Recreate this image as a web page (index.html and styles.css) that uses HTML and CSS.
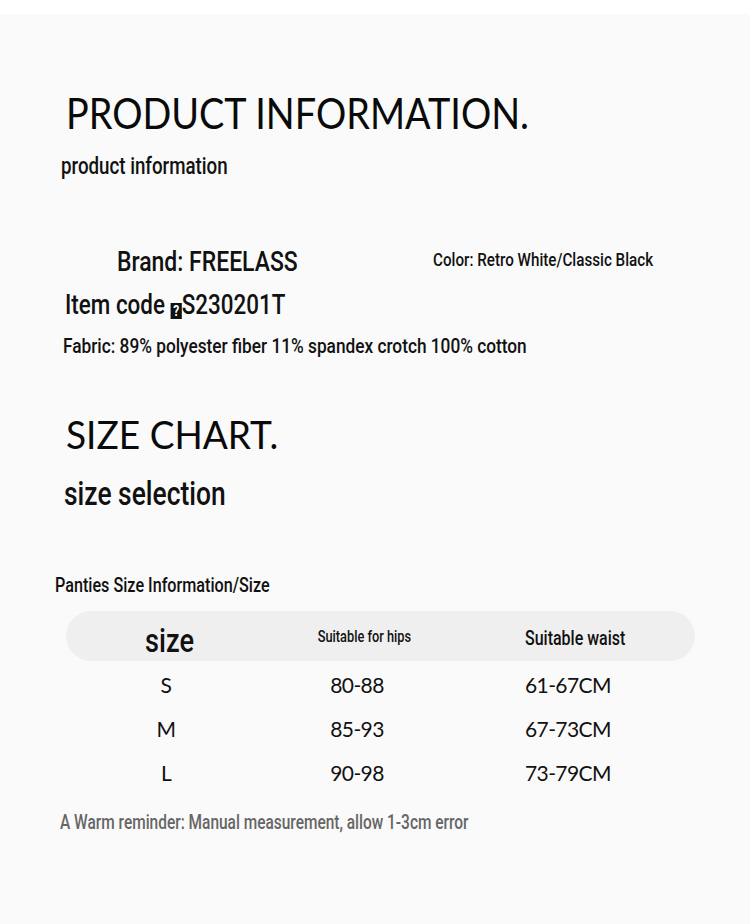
FILE: index.html
```html
<!DOCTYPE html>
<html>
<head>
<meta charset="utf-8">
<link rel="stylesheet" href="styles.css">
</head>
<body>
<div class="top-band"></div>
<main class="page">
  <section class="info">
    <h1 class="title"><span class="sx t1">PRODUCT INFORMATION.</span></h1>
    <p class="subtitle"><span class="sx s-sub">product information</span></p>
    <div class="brand-row">
      <p class="brand"><span class="sx s-brand">Brand: FREELASS</span></p>
      <p class="color"><span class="sx">Color: Retro White/Classic Black</span></p>
    </div>
    <p class="item"><span class="sx">Item code<span class="missing">?</span>S230201T</span></p>
    <p class="fabric"><span class="sx s-fabric">Fabric: 89% polyester fiber 11% spandex crotch 100% cotton</span></p>
  </section>
  <section class="chart">
    <h2 class="title2"><span class="sx t2">SIZE CHART.</span></h2>
    <p class="subtitle2"><span class="sx">size selection</span></p>
    <p class="table-caption"><span class="sx s-cap">Panties Size Information/Size</span></p>
    <div class="table">
      <div class="thead">
        <span class="c1 h-size"><span class="sx sc">size</span></span>
        <span class="c2 h-hips"><span class="sx sc">Suitable for hips</span></span>
        <span class="c3 h-waist"><span class="sx">Suitable waist</span></span>
      </div>
      <div class="row"><span class="c1">S</span><span class="c2">80-88</span><span class="c3">61-67CM</span></div>
      <div class="row"><span class="c1">M</span><span class="c2">85-93</span><span class="c3">67-73CM</span></div>
      <div class="row"><span class="c1">L</span><span class="c2">90-98</span><span class="c3">73-79CM</span></div>
    </div>
    <p class="note"><span class="sx s-note">A Warm reminder: Manual measurement, allow 1-3cm error</span></p>
  </section>
</main>
</body>
</html>
```
FILE: styles.css
```css
* { box-sizing: border-box; margin: 0; padding: 0; }
html, body { width: 750px; height: 924px; }
body {
  background: #fafafa;
  color: #111;
  font-family: "Roboto", "Liberation Sans", sans-serif;
  font-weight: 500;
  overflow: hidden;
}
.top-band { height: 14px; background: #ffffff; }

.sx {
  display: inline-block;
  white-space: nowrap;
  transform: scaleX(0.8);
  transform-origin: 0 50%;
}
.sc { transform-origin: 50% 50%; }
.t1 { transform: scaleX(0.88); }
.t2 { transform: scaleX(0.95); }
.s-sub { transform: scaleX(0.78); }
.s-brand { transform: scaleX(0.82); }
.s-fabric { transform: scaleX(0.822); }
.s-cap { transform: scaleX(0.77); }
.s-note { transform: scaleX(0.773); }

.title {
  font-family: "Lato", "DejaVu Sans", sans-serif;
  font-weight: 400;
  font-size: 43px;
  line-height: 50px;
  margin: 74px 0 0 66px;
  color: #0a0a0a;
}
.subtitle {
  font-size: 24px;
  line-height: 28px;
  margin: 14px 0 0 61px;
}
.brand-row {
  display: flex;
  align-items: flex-start;
  margin: 65px 0 0 117px;
}
.brand { font-size: 28px; line-height: 34px; width: 316px; }
.color { font-size: 19px; line-height: 22px; margin-top: 4px; }
.item {
  font-size: 28px;
  line-height: 34px;
  margin: 9px 0 0 65px;
}
.missing {
  display: inline-block;
  background: #111;
  color: #fff;
  font-size: 15px;
  line-height: 16px;
  height: 16px;
  width: 14px;
  text-align: center;
  vertical-align: -2px;
  font-weight: 700;
  margin: 0 0 0 7px;
}
.fabric {
  font-size: 21px;
  line-height: 26px;
  margin: 11px 0 0 63px;
}

.title2 {
  font-family: "Lato", "DejaVu Sans", sans-serif;
  font-weight: 400;
  font-size: 39px;
  line-height: 46px;
  margin: 52px 0 0 66px;
  color: #0a0a0a;
}
.subtitle2 {
  font-size: 33px;
  line-height: 40px;
  margin: 17px 0 0 64px;
}
.table-caption {
  font-size: 21px;
  line-height: 26px;
  margin: 58px 0 0 55px;
}
.table { margin: 13px 0 0 66px; width: 629px; }
.thead, .row {
  display: grid;
  grid-template-columns: 204px 174px 1fr;
}
.thead {
  height: 50px;
  background: #efefef;
  border-radius: 25px;
  align-items: start;
}
.row {
  height: 44px;
  line-height: 44px;
  font-family: "Lato", "DejaVu Sans", sans-serif;
  font-weight: 400;
  font-size: 21px;
  letter-spacing: -0.6px;
}
.thead + .row { margin-top: 2px; }
.c1, .c2 { text-align: center; }
.row .c1 { padding-right: 4px; }
.c3 { padding-left: 81px; }
.h-size { font-size: 34px; line-height: 40px; padding-top: 9px; padding-left: 4px; }
.h-hips { font-size: 16px; line-height: 20px; padding-top: 16px; padding-left: 14px; }
.h-waist { font-size: 20px; line-height: 24px; padding-top: 15px; }
.note {
  font-size: 20px;
  line-height: 24px;
  color: #666;
  margin: 15px 0 0 60px;
}
```
